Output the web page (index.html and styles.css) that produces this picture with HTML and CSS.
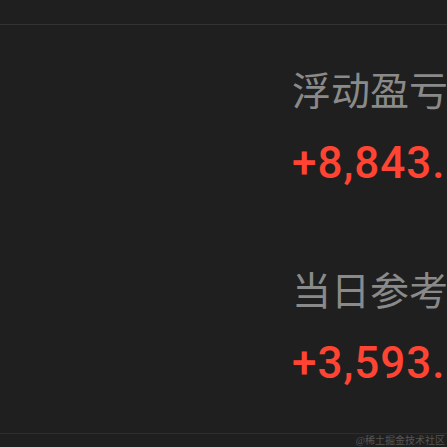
FILE: index.html
```html
<!DOCTYPE html>
<html lang="zh-CN">
<head>
<meta charset="utf-8">
<title>盈亏</title>
<link rel="stylesheet" href="styles.css">
</head>
<body>
<div class="page">
  <div class="topbar"></div>
  <main class="content">
    <section class="stat">
      <div class="label">浮动盈亏</div>
      <div class="value">+8,843.</div>
    </section>
    <section class="stat stat-second">
      <div class="label">当日参考</div>
      <div class="value">+3,593.</div>
    </section>
  </main>
  <footer class="footer">
    <span class="mark">@稀土掘金技术社区</span>
  </footer>
</div>
</body>
</html>
```
FILE: styles.css
```css
html, body {
  margin: 0;
  padding: 0;
  background: #1f1f1f;
}
.page {
  width: 447px;
  height: 447px;
  overflow: hidden;
  display: flex;
  flex-direction: column;
  background: #1f1f1f;
}
.topbar {
  height: 24px;
  border-bottom: 1px solid #333333;
  flex: none;
}
.content {
  flex: 1;
  padding-left: 292px;
  padding-top: 41px;
  white-space: nowrap;
  overflow: hidden;
}
.stat {
  display: flex;
  flex-direction: column;
}
.stat-second {
  margin-top: 79px;
}
.label {
  font-family: "Noto Sans CJK SC", sans-serif;
  font-size: 39px;
  line-height: 44px;
  color: #8a8a8a;
}
.value {
  margin-top: 29px;
  font-family: Roboto, "Liberation Sans", sans-serif;
  font-weight: 500;
  font-size: 44px;
  letter-spacing: 1px;
  line-height: 48px;
  color: #ff4433;
}
.footer {
  flex: none;
  height: 13px;
  border-top: 1px solid #2e2e2e;
  display: flex;
  justify-content: flex-end;
  align-items: flex-end;
}
.mark {
  font-family: "Liberation Serif", "Noto Sans CJK SC", serif;
  font-size: 10px;
  line-height: 12px;
  color: #555555;
  padding-right: 2px;
}
```
